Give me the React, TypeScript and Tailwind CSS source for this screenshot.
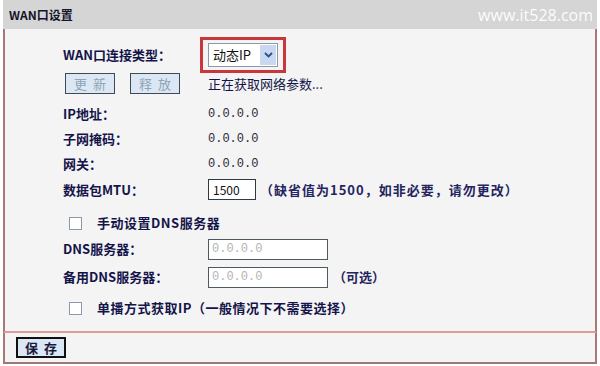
import type { ReactNode } from 'react';

const cjk = '"Noto Sans CJK SC", "Liberation Sans", sans-serif';

function Label({ children }: { children: ReactNode }) {
  return <div className="w-[145px] shrink-0 text-[13px] font-bold text-[#14144a]">{children}</div>;
}

function Value({ children }: { children: ReactNode }) {
  return <span className="text-[12px] text-[#2a2a3a] [font-family:'Liberation_Mono',monospace]">{children}</span>;
}

function Check({ label }: { label: ReactNode }) {
  return (
    <div className="flex h-[26px] items-center pl-[6px]">
      <span className="h-[13px] w-[13px] border border-[#8a9aad] bg-white" />
      <span className="ml-[15px] text-[13px] font-bold tracking-[0.5px] text-[#14144a]">{label}</span>
    </div>
  );
}

function Btn({ children, disabled }: { children: ReactNode; disabled?: boolean }) {
  return (
    <button
      className={`flex h-[21px] w-[50px] items-center justify-center bg-[#dbe7f4] text-[13px] tracking-[6px] indent-[6px] ${
        disabled ? 'border border-[#3f4a56] text-[#8fa3b3]' : 'border-2 border-[#111] text-[#1a1a3a] font-bold'
      }`}
    >
      {children}
    </button>
  );
}

export default function App() {
  return (
    <div className="h-[366px] w-[600px] bg-white pl-[3px]" style={{ fontFamily: cjk }}>
      <div className="w-[594px]">
        {/* title bar */}
        <div className="flex h-[29px] items-center justify-between bg-[#d5d5d5] pl-[6px] pr-[4px]">
          <span className="text-[12px] font-bold text-[#14142a]">WAN口设置</span>
          <span className="text-[16px] text-white/95 [font-family:'Open_Sans',sans-serif]">www.it528.com</span>
        </div>

        {/* form body */}
        <div className="h-[304px] border-x-2 border-b-2 border-x-[#a87a74] border-b-[#e09a98] bg-[#f4f4f4] pl-[58px] pt-[8px]">
          <div className="flex h-[36px] items-center">
            <Label>WAN口连接类型：</Label>
            <div className="-ml-[8px] flex h-[36px] w-[86px] items-center border-[3px] border-[#c9373a] pl-[5px]">
              <div className="flex h-[24px] w-[70px] items-center border border-[#8a9aa8] bg-white pl-[4px] pr-[1px]">
                <span className="flex-1 text-[13px] text-[#111]">动态IP</span>
                <span className="flex h-[20px] w-[16px] items-center justify-center bg-[#c7d8f0]">
                  <svg width="9" height="6" viewBox="0 0 9 6">
                    <path d="M1 1 L4.5 4.5 L8 1" fill="none" stroke="#2d4f8c" strokeWidth="1.8" />
                  </svg>
                </span>
              </div>
            </div>
          </div>

          <div className="flex h-[21px] items-center">
            <div className="flex w-[145px] shrink-0 gap-[15px] pl-[2px]">
              <Btn disabled>更新</Btn>
              <Btn disabled>释放</Btn>
            </div>
            <span className="text-[13px] text-[#14144a]">正在获取网络参数...</span>
          </div>

          <div className="mt-[7px] flex h-[25px] items-center">
            <Label>IP地址：</Label>
            <Value>0.0.0.0</Value>
          </div>
          <div className="flex h-[25px] items-center">
            <Label>子网掩码：</Label>
            <Value>0.0.0.0</Value>
          </div>
          <div className="flex h-[25px] items-center">
            <Label>网关：</Label>
            <Value>0.0.0.0</Value>
          </div>
          <div className="flex h-[27px] items-center">
            <Label>数据包MTU：</Label>
            <div className="flex h-[21px] w-[48px] items-center border border-[#2f3a44] bg-white pl-[4px] text-[12px] text-[#111]">
              1500
            </div>
            <span className="ml-[4px] text-[13px] font-bold tracking-[1px] text-[#24245e]">（缺省值为1500，如非必要，请勿更改）</span>
          </div>

          <div className="mt-[7px]">
            <Check label="手动设置DNS服务器" />
          </div>
          <div className="flex h-[26px] items-center">
            <Label>DNS服务器：</Label>
            <div className="flex h-[21px] w-[120px] items-center border border-[#4c5a60] bg-white pl-[3px]">
              <span className="text-[12px] text-[#b4b4b4] [font-family:'Liberation_Mono',monospace]">0.0.0.0</span>
            </div>
          </div>
          <div className="mt-[2px] flex h-[26px] items-center">
            <Label>备用DNS服务器：</Label>
            <div className="flex h-[21px] w-[120px] items-center border border-[#4c5a60] bg-white pl-[3px]">
              <span className="text-[12px] text-[#b4b4b4] [font-family:'Liberation_Mono',monospace]">0.0.0.0</span>
            </div>
            <span className="ml-[5px] text-[13px] font-bold text-[#24245e]">（可选）</span>
          </div>

          <div className="mt-[5px]">
            <Check label="单播方式获取IP（一般情况下不需要选择）" />
          </div>
        </div>

        {/* footer */}
        <div className="h-[31px] border-x-2 border-b-2 border-x-[#a87a74] border-b-[#9a7a78] bg-[#f4f4f4] pl-[11px] pt-[4px]">
          <Btn>保存</Btn>
        </div>
      </div>
    </div>
  );
}
